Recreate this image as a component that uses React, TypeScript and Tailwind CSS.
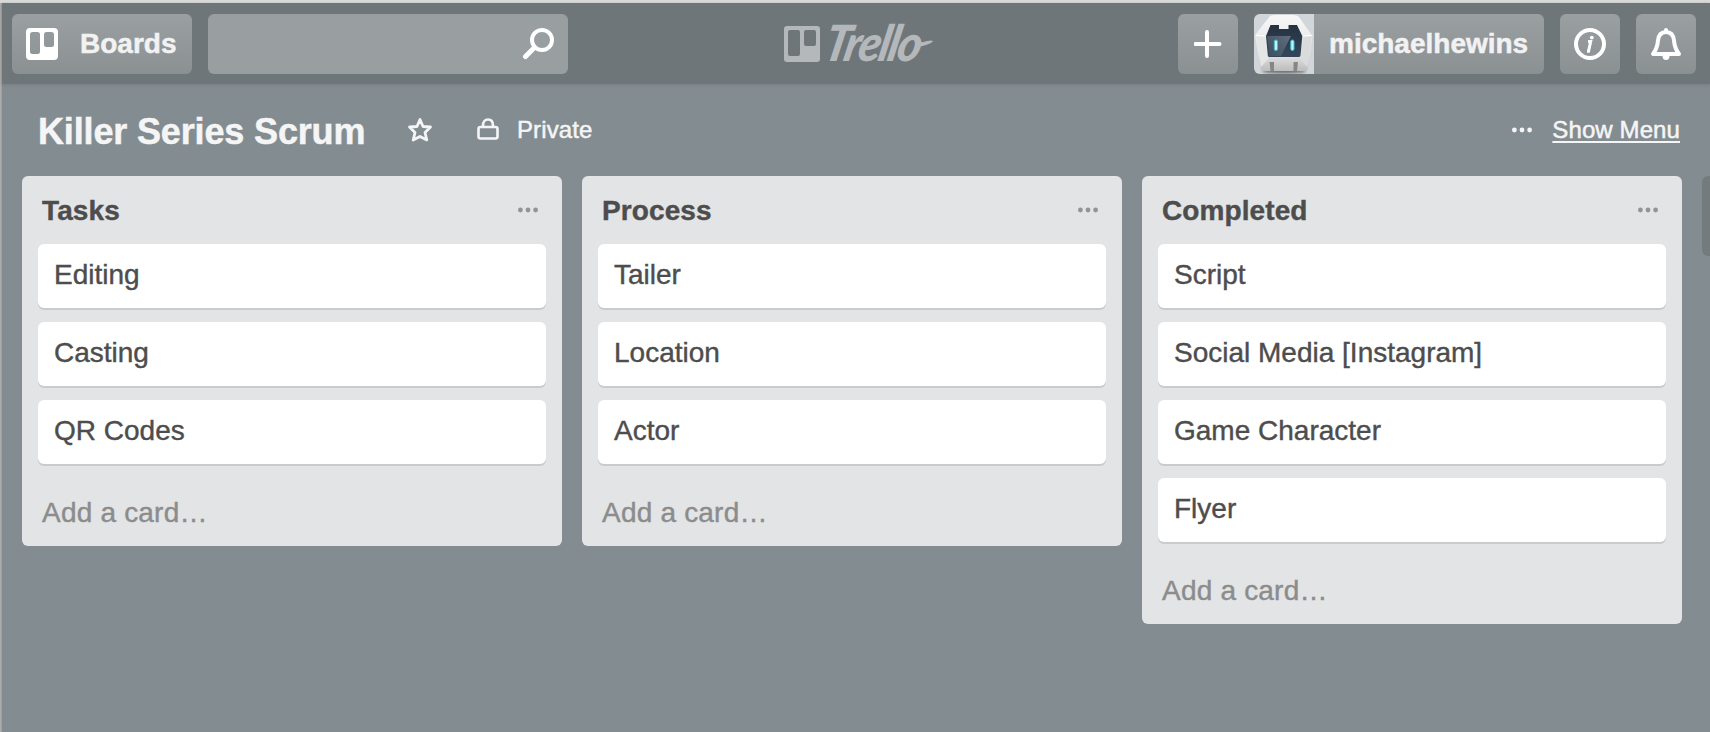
import type { ReactNode } from 'react';

type List = { title: string; cards: string[] };

const lists: List[] = [
  { title: 'Tasks', cards: ['Editing', 'Casting', 'QR Codes'] },
  { title: 'Process', cards: ['Tailer', 'Location', 'Actor'] },
  {
    title: 'Completed',
    cards: ['Script', 'Social Media [Instagram]', 'Game Character', 'Flyer'],
  },
];

function BoardGlyph({ className }: { className: string }) {
  return (
    <svg className={className} viewBox="0 0 36 36" fill="currentColor">
      <path
        fillRule="evenodd"
        d="M3 0h30a3 3 0 0 1 3 3v30a3 3 0 0 1-3 3H3a3 3 0 0 1-3-3V3a3 3 0 0 1 3-3ZM6 4a2 2 0 0 0-2 2v22a2 2 0 0 0 2 2h8a2 2 0 0 0 2-2V6a2 2 0 0 0-2-2ZM22 4a2 2 0 0 0-2 2v12a2 2 0 0 0 2 2h8a2 2 0 0 0 2-2V6a2 2 0 0 0-2-2Z"
      />
    </svg>
  );
}

function BoardsIcon() {
  return (
    <svg className="size-8" viewBox="0 0 32 32" fill="#fff">
      <path
        fillRule="evenodd"
        d="M4 0h24a4 4 0 0 1 4 4v24a4 4 0 0 1-4 4H4a4 4 0 0 1-4-4V4a4 4 0 0 1 4-4ZM6.500 4A2.500 2.500 0 0 0 4 6.500v17A2.500 2.500 0 0 0 6.500 26h5a2.500 2.500 0 0 0 2.500-2.500v-17A2.500 2.500 0 0 0 11.500 4ZM20.500 4A2.500 2.500 0 0 0 18 6.500v10a2.500 2.500 0 0 0 2.500 2.500h5a2.500 2.500 0 0 0 2.500-2.500v-10A2.500 2.500 0 0 0 25.500 4Z"
      />
    </svg>
  );
}

function Dots({ className }: { className: string }) {
  return (
    <svg className={className} viewBox="0 0 20 6" fill="currentColor">
      <circle cx="2.400" cy="3" r="2.400" />
      <circle cx="10" cy="3" r="2.400" />
      <circle cx="17.600" cy="3" r="2.400" />
    </svg>
  );
}

function Avatar() {
  return (
    <svg className="size-15 rounded-l-md" viewBox="0 0 60 60">
      <defs>
        <linearGradient id="shell" x1="0" y1="0" x2="0" y2="1">
          <stop offset="0" stopColor="#f7f7f7" />
          <stop offset="0.700" stopColor="#e4e4e4" />
          <stop offset="1" stopColor="#bcbcbc" />
        </linearGradient>
        <linearGradient id="visor" x1="0" y1="0" x2="0" y2="1">
          <stop offset="0" stopColor="#253241" />
          <stop offset="1" stopColor="#34475a" />
        </linearGradient>
        <linearGradient id="shine" x1="0" y1="1" x2="1" y2="0">
          <stop offset="0" stopColor="#8794a0" stopOpacity="0.100" />
          <stop offset="1" stopColor="#8794a0" stopOpacity="0.600" />
        </linearGradient>
        <filter id="soft" x="-20%" y="-100%" width="140%" height="300%">
          <feGaussianBlur stdDeviation="1.800" />
        </filter>
      </defs>
      <rect width="60" height="60" fill="#d0d6da" />
      <ellipse cx="30" cy="57" rx="22" ry="2.500" fill="#6b6d6e" filter="url(#soft)" />
      <path d="M16 2Q18 1 21 1h18q4 0 6 2l12 17q1.500 2 1 5l-4 29q-.500 3-3 3H10q-3 0-3.500-3L1.500 25q-.500-3 1-6Z" fill="url(#shell)" />
      <path d="M2 22 11 22.500 14 45 7 53Z" fill="#e4e5e5" />
      <path d="M58 22 49 22.500 46 45 53.500 53Z" fill="#dadbdb" />
      <path d="M1.500 21.500 11 22M58.500 21.500 49 22" stroke="#fff" strokeWidth="1" />
      <path d="M16.500 11H25v4h9.500v-4H43l5.300 11-1.800 19.500q-.200 1.500-2 1.500H15.500q-1.500 0-1.700-1.500L12 22Z" fill="url(#visor)" />
      <path d="M13 22h24L27 42H15Z" fill="url(#shine)" />
      <rect x="20.300" y="26" width="3.200" height="10.500" rx="1.600" fill="#b9f6f8" stroke="#44bccb" />
      <rect x="36.800" y="26" width="3.200" height="10.500" rx="1.600" fill="#b9f6f8" stroke="#44bccb" />
      <path d="M15.500 48h4.500v9h-3.500ZM39.500 48H44l-1 9h-3.500Z" fill="#858687" />
    </svg>
  );
}

const surface = 'h-15 rounded-md bg-linear-to-b from-[#9a9fa1] to-[#8b9093]';
const label = 'pt-px text-[28px] font-bold leading-9 [-webkit-text-stroke:0.500px_currentColor]';

function IconButton({ children }: { children: ReactNode }) {
  return <button className={`${surface} flex w-15 items-center justify-center`}>{children}</button>;
}

function TopBar() {
  return (
    <header className="relative flex h-[81px] shrink-0 items-center justify-between bg-[#6e7679] pr-3.5 pl-2.5 shadow-[0_1px_3px_#6e767999]">
      <div className="flex gap-4">
        <button className={`${surface} flex w-45 items-center gap-[22px] pl-3.5`}>
          <BoardsIcon />
          <span className={label}>Boards</span>
        </button>
        <div className="flex h-15 w-90 items-center justify-end rounded-md bg-[#999ea0] pr-3.5">
          <svg className="size-8" viewBox="0 0 32 32" fill="none" stroke="#fff" strokeLinecap="round">
            <circle cx="20" cy="12" r="10" strokeWidth="4" />
            <path d="M12.500 19.500 3.500 28.500" strokeWidth="5" />
          </svg>
        </div>
      </div>
      <div className="absolute top-[17px] left-[782px] flex text-[#b4b8bb]">
        <BoardGlyph className="mt-[6px] size-9" />
        <span className="ml-px origin-bottom-left -skew-x-[13deg] scale-x-[0.95] scale-y-[1.04] font-['Lato'] text-[48px] leading-[46px] font-black tracking-[-2px] italic">
          Trello
        </span>
        <svg className="absolute top-[19px] left-[132px] h-3 w-[18px]" viewBox="0 0 18 12" fill="currentColor">
          <path d="M0 3Q6 4 11 2q7-1.500 5.500 1Q12 6 2 8Z" />
        </svg>
      </div>
      <div className="flex gap-4">
        <IconButton>
          <svg className="size-7" viewBox="0 0 28 28" stroke="#fff" strokeWidth="4" strokeLinecap="round">
            <path d="M13 2v24M1.500 14h24" />
          </svg>
        </IconButton>
        <button className={`${surface} flex w-[290px] items-center gap-[15px]`}>
          <Avatar />
          <span className={label}>michaelhewins</span>
        </button>
        <IconButton>
          <svg className="size-8" viewBox="0 0 32 32" fill="none" stroke="#fff">
            <circle cx="16" cy="16" r="14" strokeWidth="4" />
            <path d="M14 13.500h2.700l-2.200 10M13 23.200h2.800" strokeWidth="3" />
            <circle cx="17.800" cy="9.600" r="1.900" fill="#fff" stroke="none" />
          </svg>
        </IconButton>
        <IconButton>
          <svg className="size-8" viewBox="0 0 32 32" fill="none" stroke="#fff" strokeLinejoin="round" strokeLinecap="round">
            <path d="M16 4c-5 0-7.500 3.500-8 8.500-.500 6-1.500 9-5 13.500h26c-3.500-4.500-4.500-7.500-5-13.500C23.500 7.500 21 4 16 4Z" strokeWidth="4" />
            <path d="M12.500 28h7a3.500 4 0 0 1-7 0Z" fill="#fff" stroke="none" />
            <path d="M16 2v2" strokeWidth="4" />
          </svg>
        </IconButton>
      </div>
    </header>
  );
}

function BoardHeader() {
  return (
    <div className="flex h-23 shrink-0 items-start pr-[30px] pl-9 text-[24px] leading-8 text-[#f5f5f5] [-webkit-text-stroke:0.500px_currentColor]">
      <h1 className="w-[369px] pt-[26px] text-[36px] leading-11 font-bold tracking-[-0.150px]">Killer Series Scrum</h1>
      <svg className="mt-[33px] h-[25px] w-[26px]" viewBox="0 0 26 25" fill="none" stroke="currentColor" strokeWidth="2.800" strokeLinejoin="round">
        <path d="M13 2.500 16 9.500l7.500.500-5.500 5.500 1.800 7.500-6.800-3.500L6.200 23 8 15.500 2.500 10l7.500-.500Z" />
      </svg>
      <svg className="mt-[33px] ml-[43px] h-6 w-6" viewBox="0 0 24 24" fill="none" stroke="currentColor" strokeWidth="2.600">
        <rect x="2.500" y="10" width="19" height="11.500" rx="2" />
        <path d="M7 10V8.500C7 4.500 9 2.500 12 2.500s5 2 5 6V10" />
      </svg>
      <span className="ml-[17px] pt-[30px] tracking-[0.100px]">Private</span>
      <Dots className="mt-[43px] ml-auto h-1.5 w-5" />
      <a className="ml-5 pt-[30px] tracking-[0.100px] underline decoration-2 underline-offset-[3px]">Show Menu</a>
    </div>
  );
}

function ListColumn({ list }: { list: List }) {
  return (
    <section className="w-[540px] shrink-0 rounded-md bg-[#e2e4e6] p-4 text-[28px] leading-9 text-[#4d4d4d] [-webkit-text-stroke:0.400px_currentColor]">
      <div className="flex items-center justify-between pt-px pr-2 pb-[15px] pl-1">
        <h2 className="font-bold tracking-[0.100px]">{list.title}</h2>
        <Dots className="mb-1 h-1.5 w-5 translate-y-px text-[#939494]" />
      </div>
      <ul className="flex flex-col gap-3.5">
        {list.cards.map((card) => (
          <li key={card} className="rounded-md bg-white px-4 pt-[13px] pb-[15px] shadow-[0_2px_0_#c9cbcc]">
            {card}
          </li>
        ))}
      </ul>
      <p className="-mb-px pt-[31px] pl-1 tracking-[0.200px] text-[#8c8c8c]">Add a card…</p>
    </section>
  );
}

export default function App() {
  return (
    <div className="flex h-[732px] w-[1710px] overflow-hidden font-['Liberation_Sans',Arial,sans-serif]">
      <div className="h-full w-0.5 shrink-0 bg-linear-to-r from-[#b5b2b0] to-[#9b9b9b]" />
      <div className="flex min-w-0 flex-1 flex-col bg-[#838c91] text-[#f2f2f2]">
        <div className="-ml-0.5 h-[3px] shrink-0 bg-[#d9dad9]" />
        <TopBar />
        <BoardHeader />
        <main className="flex items-start gap-5 pl-5">
          {lists.map((list) => (
            <ListColumn key={list.title} list={list} />
          ))}
          <div className="h-20 w-[540px] shrink-0 rounded-md bg-[#737b7d]" />
        </main>
      </div>
    </div>
  );
}
